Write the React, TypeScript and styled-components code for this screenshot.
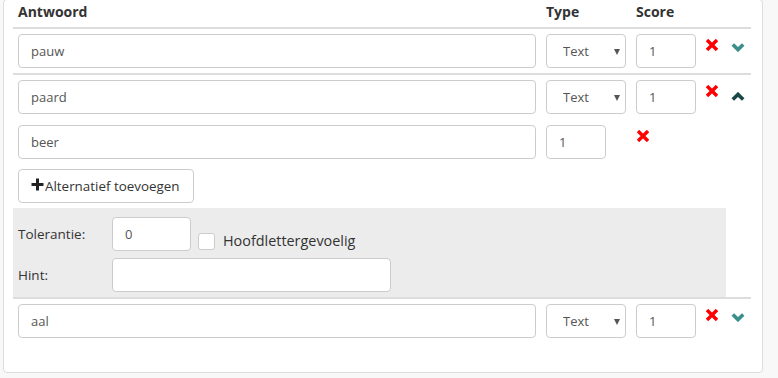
import React from "react";
import styled, { createGlobalStyle } from "styled-components";

const Global = createGlobalStyle`
  html, body { margin: 0; padding: 0; background: #f8f8f8; }
  body { font-family: "Open Sans", "Liberation Sans", sans-serif; color: #333; }
  * { box-sizing: border-box; }
`;

const Panel = styled.div`
  width: 760px;
  margin: -1px 0 0 3px;
  background: #fff;
  border: 1px solid #ddd;
  border-radius: 4px;
  padding: 0 9px 29px 9px;
`;

const Table = styled.div`
  width: 738px;
`;

const COLS = "518px 80px 60px auto";

const HeaderRow = styled.div`
  display: grid;
  grid-template-columns: ${COLS};
  column-gap: 10px;
  padding: 2px 5px 5px;
  border-bottom: 2px solid #ddd;
`;

const HeadCell = styled.div`
  font-size: 14px;
  font-weight: 700;
  line-height: 20px;
  color: #333;
`;

const Row = styled.div<{ $last?: boolean }>`
  padding: 5px;
  border-bottom: ${(p) => (p.$last ? "none" : "2px solid #ddd")};
  display: flex;
  flex-direction: column;
  align-items: flex-start;
`;

const FieldLine = styled.div<{ $gapTop?: number }>`
  display: grid;
  grid-template-columns: ${COLS};
  column-gap: 10px;
  align-items: start;
  margin-top: ${(p) => p.$gapTop ?? 0}px;
`;

const TextInput = styled.input<{ $w?: number }>`
  width: ${(p) => (p.$w ? `${p.$w}px` : "100%")};
  height: 34px;
  padding: 6px 12px;
  font-family: "Open Sans", "Liberation Sans", sans-serif;
  font-size: 13px;
  line-height: 20px;
  color: #555;
  background: #fff;
  border: 1px solid #ccc;
  border-radius: 4px;
  outline: none;
`;

const SelectWrap = styled.div`
  position: relative;
  width: 80px;
  &::after {
    content: "";
    position: absolute;
    right: 6px;
    top: 15px;
    border-left: 3.5px solid transparent;
    border-right: 3.5px solid transparent;
    border-top: 6px solid #555;
  }
`;

const Select = styled.select`
  appearance: none;
  -webkit-appearance: none;
  width: 80px;
  height: 34px;
  padding: 6px 12px 6px 16px;
  font-family: "Open Sans", "Liberation Sans", sans-serif;
  font-size: 13px;
  color: #555;
  background: #fff;
  border: 1px solid #ccc;
  border-radius: 4px;
  outline: none;
`;

const Actions = styled.div<{ $pad?: number }>`
  display: flex;
  align-items: flex-start;
  gap: 13px;
  padding-top: 5px;
  padding-left: ${(p) => p.$pad ?? 0}px;
`;

const IconBox = styled.span<{ $top?: number }>`
  display: inline-flex;
  margin-top: ${(p) => p.$top ?? 0}px;
`;

const RemoveIcon = () => (
  <svg width="12" height="12" viewBox="0 0 12 12">
    <path d="M1 1 L11 11 M11 1 L1 11" stroke="#ff0000" strokeWidth="3.4" />
  </svg>
);

const Chevron = ({ up }: { up?: boolean }) => (
  <svg width="14" height="9" viewBox="0 0 14 9">
    <polyline
      points={up ? "1.8,7.6 7,2.4 12.2,7.6" : "1.8,1.4 7,6.6 12.2,1.4"}
      fill="none"
      stroke={up ? "#1a4848" : "#3a8f8a"}
      strokeWidth="3.6"
    />
  </svg>
);

const AddButton = styled.button`
  margin-top: 10px;
  display: inline-flex;
  align-items: center;
  gap: 1px;
  height: 34px;
  padding: 6px 13px 6px 12px;
  font-family: "Open Sans", "Liberation Sans", sans-serif;
  font-size: 13.4px;
  line-height: 20px;
  color: #333;
  background: #fff;
  border: 1px solid #ccc;
  border-radius: 4px;
`;

const PlusIcon = () => (
  <svg width="13" height="13" viewBox="0 0 13 13" style={{ marginTop: -3 }}>
    <path d="M6.5 0.5 V12.5 M0.5 6.5 H12.5" stroke="#222" strokeWidth="3" />
  </svg>
);

const Details = styled.div`
  margin: 5px 0 -5px -5px;
  width: 713px;
  background: #ececec;
  padding: 9px 5px 5px;
  display: grid;
  grid-template-columns: 94px auto;
  row-gap: 7px;
`;

const Label = styled.div`
  align-self: center;
  font-size: 13.5px;
  line-height: 20px;
  color: #333;
`;

const InlineGroup = styled.div`
  display: flex;
  align-items: flex-start;
`;

const CheckLabel = styled.label`
  display: inline-flex;
  align-items: center;
  gap: 8px;
  margin-left: 7px;
  margin-top: 14px;
  font-size: 14.4px;
  line-height: 20px;
  color: #333;
`;

const Checkbox = styled.input`
  appearance: none;
  -webkit-appearance: none;
  margin: 0;
  width: 17px;
  height: 17px;
  border: 1px solid #ccc;
  border-radius: 3px;
  background: #fff;
`;

const AnswerRow = ({ value, up }: { value: string; up?: boolean }) => (
  <FieldLine>
    <TextInput defaultValue={value} />
    <SelectWrap>
      <Select defaultValue="Text">
        <option>Text</option>
      </Select>
    </SelectWrap>
    <TextInput defaultValue="1" />
    <Actions>
      <IconBox>
        <RemoveIcon />
      </IconBox>
      <IconBox $top={up ? 7 : 4}>
        <Chevron up={up} />
      </IconBox>
    </Actions>
  </FieldLine>
);

export default function App() {
  return (
    <>
      <Global />
      <Panel>
        <Table>
          <HeaderRow>
            <HeadCell>Antwoord</HeadCell>
            <HeadCell>Type</HeadCell>
            <HeadCell>Score</HeadCell>
          </HeaderRow>
          <Row>
            <AnswerRow value="pauw" />
          </Row>
          <Row>
            <AnswerRow value="paard" up />
            <FieldLine $gapTop={11}>
              <TextInput defaultValue="beer" />
              <TextInput defaultValue="1" $w={60} />
              <Actions $pad={1}>
                <IconBox>
                  <RemoveIcon />
                </IconBox>
              </Actions>
            </FieldLine>
            <AddButton>
              <PlusIcon />
              Alternatief toevoegen
            </AddButton>
            <Details>
              <Label>Tolerantie:</Label>
              <InlineGroup>
                <TextInput defaultValue="0" $w={79} />
                <CheckLabel>
                  <Checkbox type="checkbox" />
                  Hoofdlettergevoelig
                </CheckLabel>
              </InlineGroup>
              <Label>Hint:</Label>
              <TextInput defaultValue="" $w={279} />
            </Details>
          </Row>
          <Row $last>
            <AnswerRow value="aal" />
          </Row>
        </Table>
      </Panel>
    </>
  );
}
